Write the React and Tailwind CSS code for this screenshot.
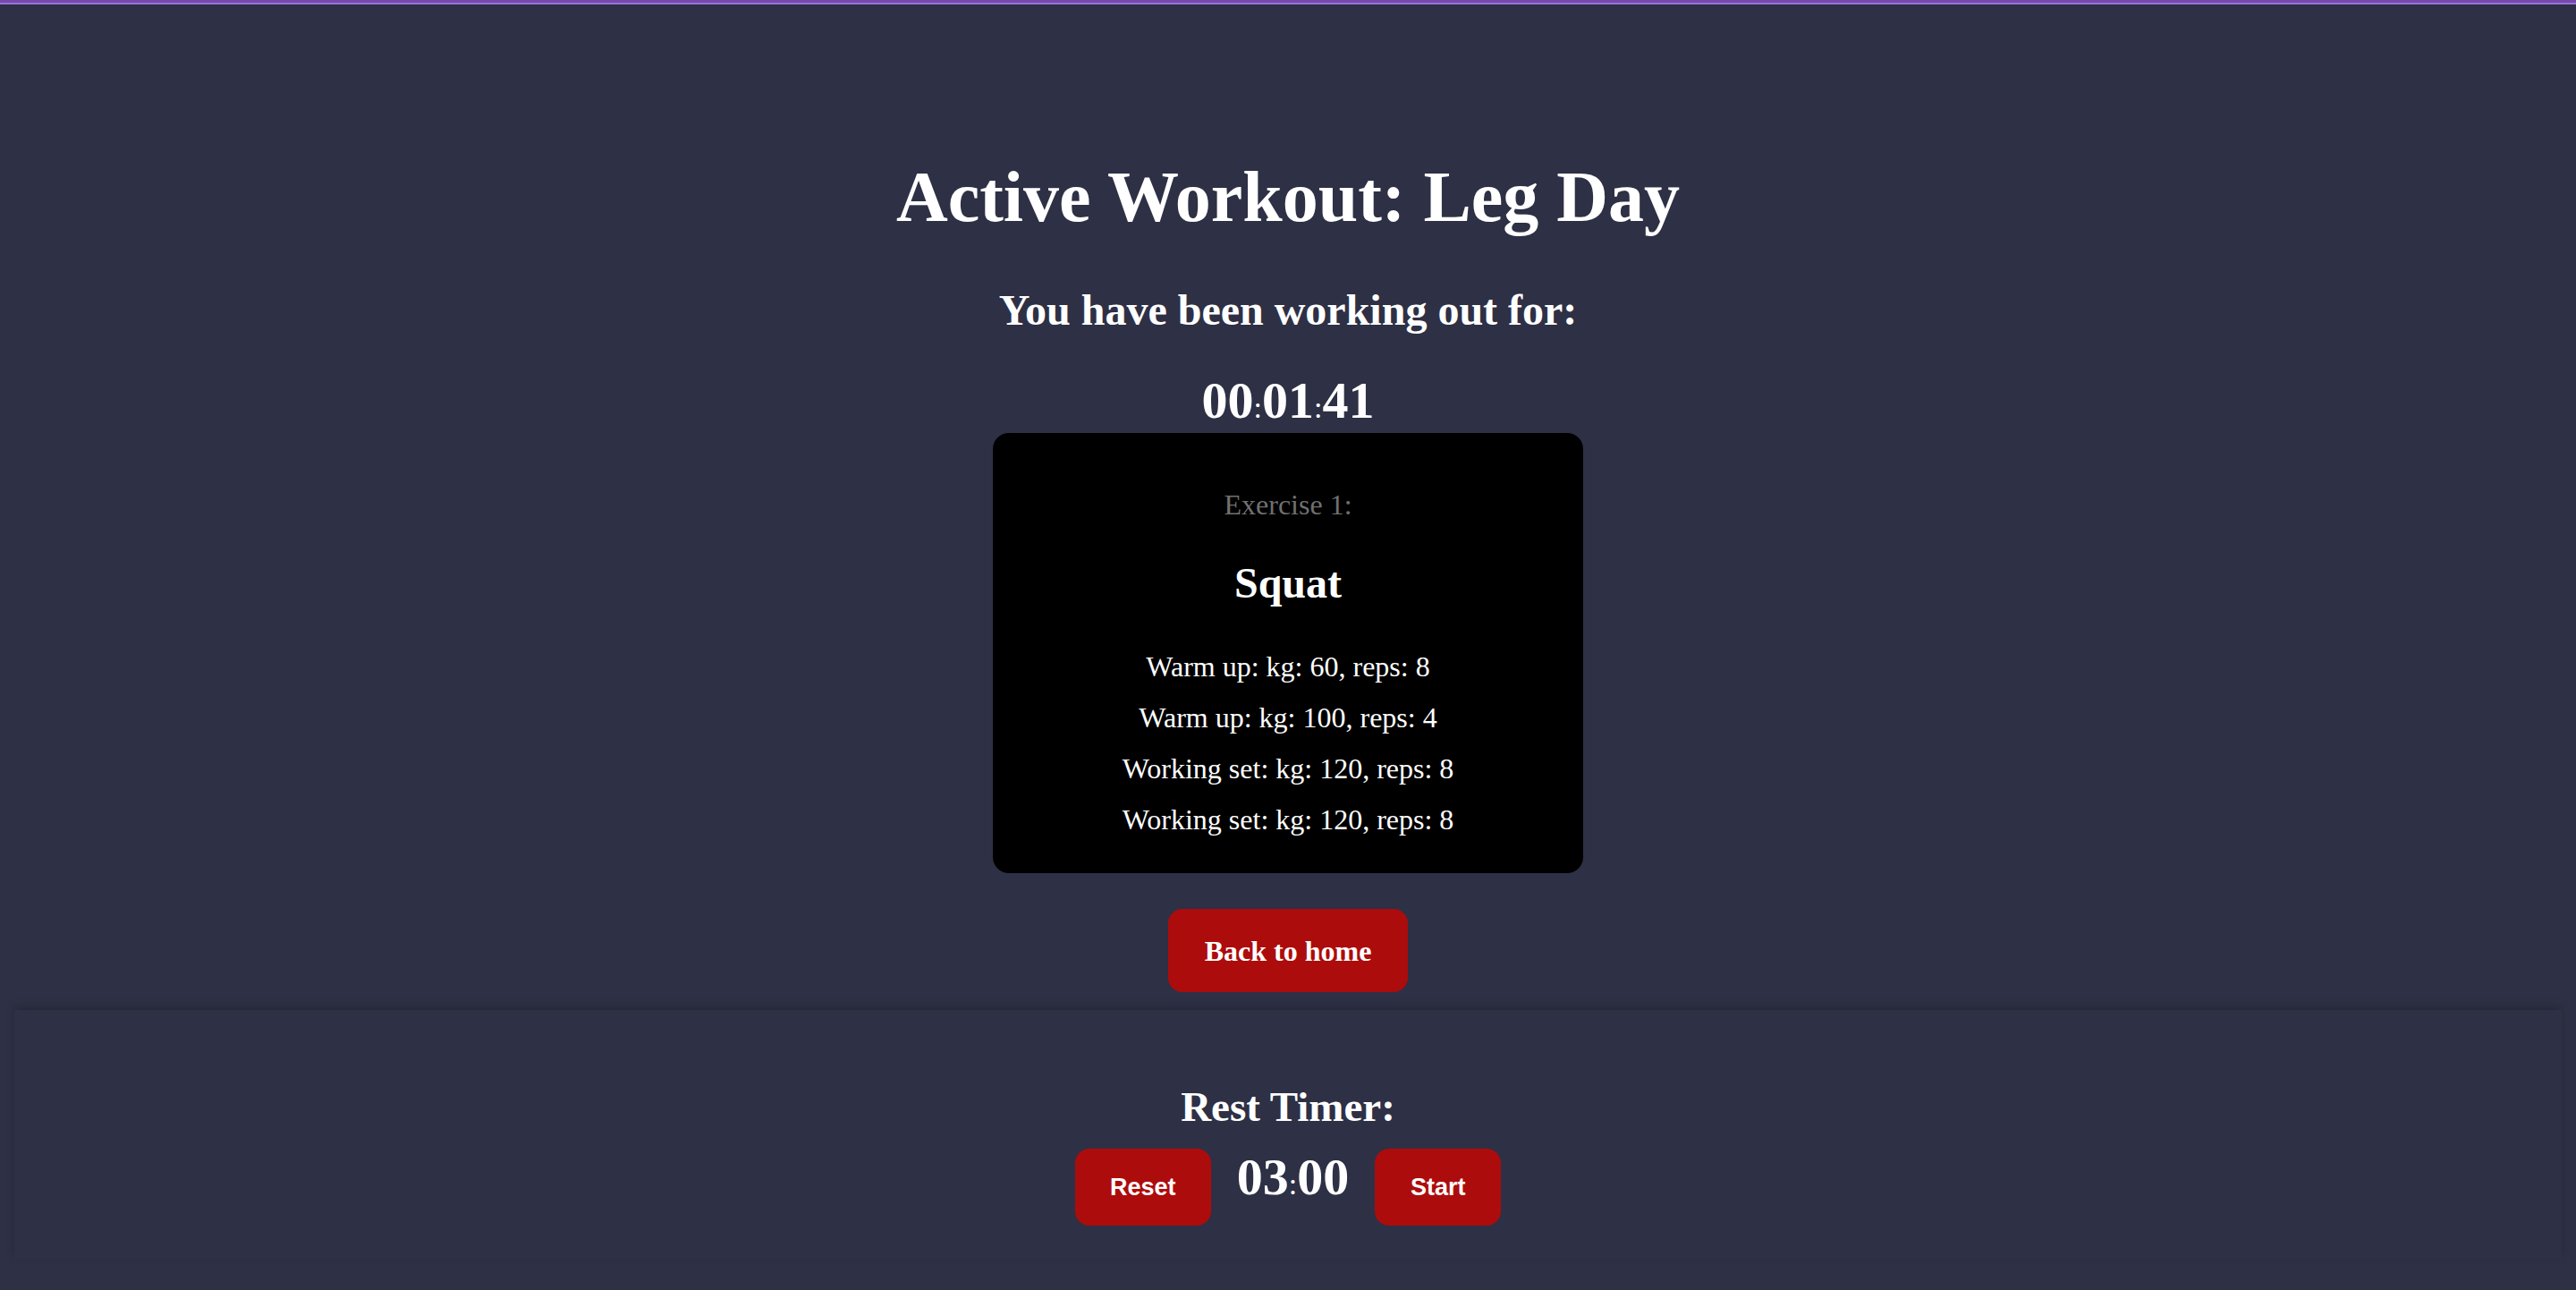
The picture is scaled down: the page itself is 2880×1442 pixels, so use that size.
import React from "react";

function Clock({ parts }) {
  return (
    <div className="text-[58px] leading-none font-bold">
      {parts.map((p, i) => (
        <React.Fragment key={i}>
          {i > 0 && <span className="text-[34px] leading-none font-normal">:</span>}
          <span>{p}</span>
        </React.Fragment>
      ))}
    </div>
  );
}

export default function App() {
  const sets = [
    "Warm up: kg: 60, reps: 8",
    "Warm up: kg: 100, reps: 4",
    "Working set: kg: 120, reps: 8",
    "Working set: kg: 120, reps: 8",
  ];
  return (
    <div className="min-h-[1442px] bg-[#2e3045] font-['Liberation_Serif','Times_New_Roman',serif] text-white">
      <div className="h-[3px] bg-[#7649ad]" />
      <div className="h-[2px] bg-[#9b72d4]" />
      <div className="flex flex-col items-center pt-[175px]">
        <h1 className="text-[80px] leading-none font-bold">Active Workout: Leg Day</h1>
        <h2 className="mt-[63px] text-[48px] leading-none font-bold">You have been working out for:</h2>
        <div className="mt-[48px]">
          <Clock parts={["00", "01", "41"]} />
        </div>
        <div className="mt-[7px] w-[660px] h-[492px] rounded-[18px] bg-black pt-[64px] flex flex-col items-center">
          <div className="text-[32px] leading-none text-[#707070]">Exercise 1:</div>
          <div className="mt-[48px] text-[48px] leading-none font-bold">Squat</div>
          <div className="mt-[41px] flex flex-col items-center">
            {sets.map((s, i) => (
              <div key={i} className="text-[32px] leading-[57px]">{s}</div>
            ))}
          </div>
        </div>
        <button className="mt-[40px] h-[93px] px-[41px] rounded-[16px] bg-[#ad0c0c] text-white text-[32px] leading-none font-bold font-['Liberation_Serif',serif]">
          Back to home
        </button>
        <div className="mt-[20px] self-stretch mx-[16px] pt-[85px] pb-[38px] flex flex-col items-center shadow-[0_-4px_10px_rgba(0,0,0,0.18)]">
          <h2 className="text-[47px] leading-none font-bold">Rest Timer:</h2>
          <div className="mt-[23px] flex items-start gap-[29px]">
            <button className="h-[86px] w-[152px] rounded-[16px] bg-[#ad0c0c] text-white font-['Liberation_Sans',Arial,sans-serif] text-[27px] leading-none font-bold flex items-center justify-center">
              Reset
            </button>
            <div className="mt-[3px]">
              <Clock parts={["03", "00"]} />
            </div>
            <button className="h-[86px] w-[141px] rounded-[16px] bg-[#ad0c0c] text-white font-['Liberation_Sans',Arial,sans-serif] text-[27px] leading-none font-bold flex items-center justify-center">
              Start
            </button>
          </div>
        </div>
      </div>
    </div>
  );
}
